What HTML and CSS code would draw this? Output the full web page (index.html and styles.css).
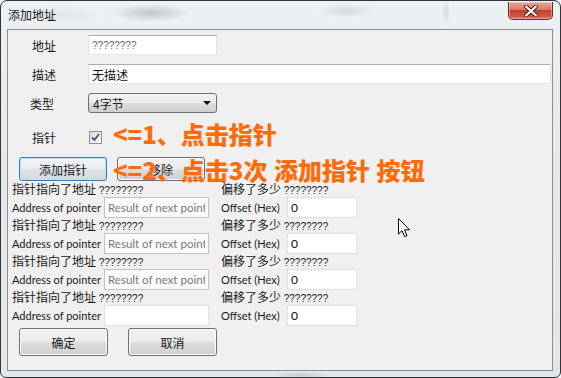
FILE: index.html
```html
<!DOCTYPE html>
<html lang="zh-CN">
<head>
  <meta charset="UTF-8">
  <title>添加地址</title>
  <link rel="stylesheet" href="styles.css">
</head>
<body>

  <div class="window">
    <div class="titlebar">
      <span class="title">添加地址</span>
      <span class="close">
        <svg width="16" height="12" viewBox="0 0 16 12"><path d="M3 1.5 L13 10.5 M13 1.5 L3 10.5" stroke="#4a1a10" stroke-width="4" stroke-linecap="round"/><path d="M3 1.5 L13 10.5 M13 1.5 L3 10.5" stroke="#fff" stroke-width="2.2" stroke-linecap="round"/></svg>
      </span>
    </div>

    <div class="client">
      <div class="field">
        <span class="field-label">地址</span>
        <input class="box addr" type="text" value="????????">
      </div>
      <div class="field">
        <span class="field-label">描述</span>
        <input class="box desc" type="text" value="无描述">
      </div>
      <div class="field">
        <span class="field-label type-label">类型</span>
        <span class="combo">4字节<span class="arrow"></span></span>
      </div>
      <div class="field check-row">
        <span class="field-label">指针</span>
        <span class="checkbox">
          <svg width="11" height="11" viewBox="0 0 11 11"><path d="M2 5.5 L4.5 8 L9 2" fill="none" stroke="#3b4f8c" stroke-width="1.8"/></svg>
        </span>
      </div>

      <div class="buttons-top">
        <span class="btn focus">添加指针</span>
        <span class="btn">移除</span>
      </div>

      <div class="pointers">
        <div class="pointer">
          <div class="pcol">
            <div class="pcap">指针指向了地址 <span class="q">????????</span></div>
            <div class="pline"><span class="plabel">Address of pointer</span><input class="box ro" type="text" value="Result of next pointer" readonly></div>
          </div>
          <div class="pcol">
            <div class="pcap">偏移了多少 <span class="q">????????</span></div>
            <div class="pline"><span class="plabel off">Offset (Hex)</span><input class="box offset" type="text" value="0"></div>
          </div>
        </div>
        <div class="pointer">
          <div class="pcol">
            <div class="pcap">指针指向了地址 <span class="q">????????</span></div>
            <div class="pline"><span class="plabel">Address of pointer</span><input class="box ro" type="text" value="Result of next pointer" readonly></div>
          </div>
          <div class="pcol">
            <div class="pcap">偏移了多少 <span class="q">????????</span></div>
            <div class="pline"><span class="plabel off">Offset (Hex)</span><input class="box offset" type="text" value="0"></div>
          </div>
        </div>
        <div class="pointer">
          <div class="pcol">
            <div class="pcap">指针指向了地址 <span class="q">????????</span></div>
            <div class="pline"><span class="plabel">Address of pointer</span><input class="box ro" type="text" value="Result of next pointer" readonly></div>
          </div>
          <div class="pcol">
            <div class="pcap">偏移了多少 <span class="q">????????</span></div>
            <div class="pline"><span class="plabel off">Offset (Hex)</span><input class="box offset" type="text" value="0"></div>
          </div>
        </div>
        <div class="pointer">
          <div class="pcol">
            <div class="pcap">指针指向了地址 <span class="q">????????</span></div>
            <div class="pline"><span class="plabel">Address of pointer</span><input class="box last" type="text" value=""></div>
          </div>
          <div class="pcol">
            <div class="pcap">偏移了多少 <span class="q">????????</span></div>
            <div class="pline"><span class="plabel off">Offset (Hex)</span><input class="box offset" type="text" value="0"></div>
          </div>
        </div>
      </div>

      <div class="buttons-bottom">
        <span class="btn big">确定</span>
        <span class="btn big">取消</span>
      </div>
    </div>

    <!-- annotations drawn over the dialog -->
    <div class="note note1">&lt;=1、点击指针</div>
    <div class="note note2">&lt;=2、点击3次 添加指针 按钮</div>

    <svg class="cursor" width="14" height="21" viewBox="0 0 14 21">
      <path d="M0.5 0.5 L0.5 16 L4 12.6 L6.6 18.6 L9 17.6 L6.5 11.8 L11.5 11.8 Z" fill="#fff" stroke="#000" stroke-width="1" stroke-linejoin="round"/>
    </svg>
  </div>

</body>
</html>
```

FILE: styles.css
```css
html, body {
  margin: 0;
  padding: 0;
  background: #f4f6f8;
}
body {
  font-family: "Noto Sans CJK SC", "Noto Sans", sans-serif;
  font-size: 12px;
  color: #1a1a1a;
}
.window {
  position: relative;
  width: 561px;
  height: 378px;
  box-sizing: border-box;
  border: 1px solid #30353a;
  border-radius: 7px 7px 6px 6px;
  padding: 0 7px 6px 6px;
  display: flex;
  flex-direction: column;
  overflow: hidden;
  background:
    radial-gradient(ellipse 40px 9px at 150px 12px, rgba(90,95,105,0.3), rgba(90,95,105,0) 100%),
    radial-gradient(ellipse 45px 8px at 60px 14px, rgba(140,145,150,0.12), rgba(140,145,150,0) 100%),
    radial-gradient(ellipse 30px 7px at 345px 10px, rgba(110,115,120,0.2), rgba(110,115,120,0) 100%),
    radial-gradient(ellipse 4px 14px at 445px 12px, rgba(120,120,120,0.2), rgba(120,120,120,0) 100%),
    radial-gradient(ellipse 30px 3px at 300px 374px, rgba(120,120,120,0.25), rgba(120,120,120,0) 100%),
    linear-gradient(#eef1f4, #e6e9ec 40%, #e3e6e9);
}
.titlebar {
  height: 28px;
  display: flex;
  justify-content: space-between;
  align-items: flex-start;
}
.title {
  margin: 6px 0 0 1px;
  font-size: 12px;
  line-height: 16px;
  color: #1b1b1b;
}
.close {
  width: 45px;
  height: 18px;
  box-sizing: border-box;
  margin-top: 1px;
  border: 1px solid #6b2c20;
  border-top: none;
  border-radius: 0 0 5px 5px;
  display: flex;
  align-items: center;
  justify-content: center;
  background: linear-gradient(#e8a898, #d47a66 45%, #c2402a 50%, #d35a42 85%, #e07a5a);
  box-shadow: inset 0 0 0 1px rgba(255,255,255,0.35);
}
.client {
  flex: 1;
  border: 1px solid #8e8e8e;
  background: #f0f0f0;
}

/* top form */
.field {
  display: flex;
  align-items: center;
  height: 20px;
  margin-top: 9px;
}
.field:first-child {
  margin-top: 5px;
}
.field-label {
  width: 80px;
  box-sizing: border-box;
  padding-left: 24px;
  font-size: 12px;
}
.type-label {
  padding-left: 22px;
}
.box {
  box-sizing: border-box;
  height: 20px;
  margin: 0;
  padding: 0 3px;
  border: 1px solid;
  border-color: #abadb3 #dbdfe6 #e3e9ef #e2e3ea;
  background: #fff;
  font-family: "Noto Sans CJK SC", sans-serif;
  font-size: 12px;
  color: #111;
  outline: none;
}
.addr {
  width: 129px;
  font-family: "Liberation Sans", sans-serif;
  font-size: 10px;
  color: #666;
}
.desc {
  width: 463px;
}
.combo {
  position: relative;
  width: 129px;
  height: 20px;
  box-sizing: border-box;
  padding: 0 4px;
  border: 1px solid #707070;
  border-radius: 3px;
  display: flex;
  align-items: center;
  background: linear-gradient(#f2f2f2, #ebebeb 50%, #dddddd 51%, #cfcfcf);
}
.arrow {
  position: absolute;
  right: 5px;
  top: 7px;
  border-left: 4px solid transparent;
  border-right: 4px solid transparent;
  border-top: 4px solid #111;
}
.check-row {
  height: 13px;
  margin-top: 18px;
}
.checkbox {
  width: 13px;
  height: 13px;
  box-sizing: border-box;
  margin-left: 1px;
  border: 1px solid #8e8f8f;
  background: linear-gradient(135deg, #dcdcdc, #fcfcfc);
  display: flex;
  align-items: center;
  justify-content: center;
}

/* buttons */
.btn {
  box-sizing: border-box;
  width: 88px;
  height: 24px;
  border: 1px solid #707070;
  border-radius: 3px;
  display: flex;
  align-items: center;
  justify-content: center;
  font-size: 12px;
  background: linear-gradient(#f2f2f2, #ebebeb 50%, #dddddd 51%, #cfcfcf);
  box-shadow: inset 0 0 0 1px #fcfcfc;
}
.btn.focus {
  border-color: #3c7fb1;
  box-shadow: inset 0 0 0 1px #b6e3f7;
  background: linear-gradient(#f1f4f6, #e9ecee 50%, #dfe3e6 51%, #d4d9dc);
}
.buttons-top {
  display: flex;
  gap: 10px;
  margin: 13px 0 0 11px;
}
.buttons-bottom {
  display: flex;
  gap: 20px;
  margin: 2px 0 0 11px;
}
.btn.big {
  width: 89px;
  height: 28px;
}

/* pointer rows */
.pointers {
  margin: 1px 0 0 4px;
}
.pointer {
  display: grid;
  grid-template-columns: 209px auto;
  height: 36px;
}
.pcap {
  height: 14px;
  line-height: 14px;
  white-space: nowrap;
}
.q {
  font-family: "Liberation Sans", sans-serif;
  font-size: 10px;
  color: #222;
}
.pline {
  display: flex;
  align-items: center;
  height: 22px;
}
.plabel {
  width: 92px;
  flex: none;
  font-family: "Lato", sans-serif;
  font-size: 11px;
  color: #1a1a1a;
  white-space: nowrap;
}
.plabel.off {
  width: 66px;
}
.ro {
  width: 105px;
  height: 21px;
  border-color: #c3c3c3;
  background: #fbfbfb;
  font-family: "Lato", sans-serif;
  font-size: 11.5px;
  color: #7a7a7a;
}
.last {
  width: 105px;
  height: 21px;
  border-color: #e2e2e2;
}
.offset {
  width: 70px;
  height: 21px;
  border-color: #e0e0e0;
  font-family: "Lato", sans-serif;
  font-size: 12px;
}

/* annotations */
.note {
  position: absolute;
  left: 112px;
  font-family: "Noto Sans CJK SC", sans-serif;
  font-weight: 900;
  font-size: 24px;
  line-height: 26px;
  color: #ff6a0a;
  white-space: nowrap;
}
.note1 {
  top: 120px;
}
.note2 {
  top: 156px;
  word-spacing: 1px;
}
.cursor {
  position: absolute;
  left: 397px;
  top: 217px;
}
```
